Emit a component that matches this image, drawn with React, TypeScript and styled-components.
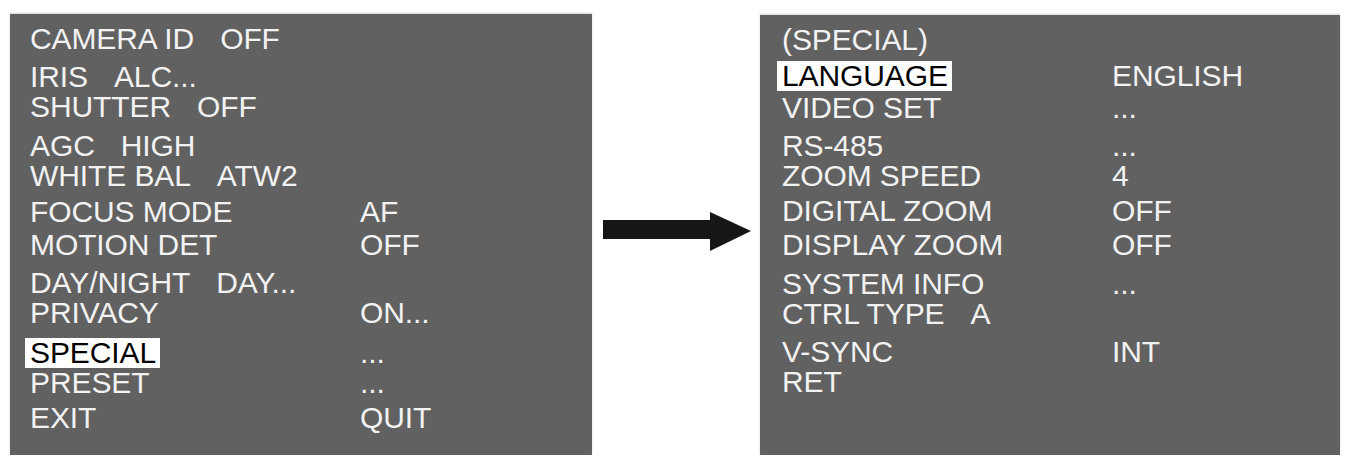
import { memo } from "react";
import styled, { createGlobalStyle } from "styled-components";

const COLOR_PAGE = "#ffffff";
const COLOR_PANEL = "#616161";
const COLOR_TEXT = "#f2f2f2";
const COLOR_ARROW = "#161616";

const GlobalStyle = createGlobalStyle`
  html, body {
    margin: 0;
    padding: 0;
    background: ${COLOR_PAGE};
  }
  body {
    font-family: "Liberation Sans", Arial, sans-serif;
  }
`;

const StyledPage = styled.div`
  display: flex;
  align-items: flex-start;
  padding: 14px 0 0 10px;
  width: 1348px;
  height: 457px;
  box-sizing: border-box;
`;

const StyledPanel = styled.div<{ $width: number; $height: number; $top?: number; $padLeft: number }>`
  flex: 0 0 auto;
  width: ${(p) => p.$width}px;
  height: ${(p) => p.$height}px;
  margin-top: ${(p) => p.$top ?? 0}px;
  padding: 10px 0 0 ${(p) => p.$padLeft}px;
  box-sizing: border-box;
  background-color: ${COLOR_PANEL};
  box-shadow: 0 -1px 2px rgba(0, 0, 0, 0.18);
  display: flex;
  flex-flow: column;
`;

const StyledRow = styled.div<{ $gap?: number }>`
  display: grid;
  grid-template-columns: 330px 1fr;
  margin-top: ${(p) => p.$gap ?? 0}px;
  height: 30px;
  line-height: 30px;
  font-size: 30px;
  letter-spacing: -0.1px;
  color: ${COLOR_TEXT};
  white-space: pre;
`;

const StyledLabel = styled.span<{ $active?: boolean }>`
  justify-self: start;
  ${(p) =>
    p.$active &&
    `
    background-color: #ffffff;
    color: #000000;
    margin-left: -5px;
    padding: 0 4px 0 5px;
  `}
`;

const StyledInline = styled.span`
  margin-left: 26px;
`;

const StyledValue = styled.span``;

const StyledArrowBox = styled.div`
  flex: 0 0 auto;
  width: 168px;
  height: 441px;
  display: flex;
  align-items: flex-start;
  padding: 198px 0 0 11px;
  box-sizing: border-box;
`;

type Item = {
  label: string;
  inline?: string;
  value?: string;
  gap?: number;
  active?: boolean;
};

const LEFT_ITEMS: Item[] = [
  { label: "CAMERA ID", inline: "OFF" },
  { label: "IRIS", inline: "ALC...", gap: 8 },
  { label: "SHUTTER", inline: "OFF" },
  { label: "AGC", inline: "HIGH", gap: 9 },
  { label: "WHITE BAL", inline: "ATW2" },
  { label: "FOCUS MODE", value: "AF", gap: 6 },
  { label: "MOTION DET", value: "OFF", gap: 3 },
  { label: "DAY/NIGHT", inline: "DAY...", gap: 8 },
  { label: "PRIVACY", value: "ON..." },
  { label: "SPECIAL", value: "...", gap: 10, active: true },
  { label: "PRESET", value: "..." },
  { label: "EXIT", value: "QUIT", gap: 5 },
];

const RIGHT_ITEMS: Item[] = [
  { label: "(SPECIAL)" },
  { label: "LANGUAGE", value: "ENGLISH", gap: 6, active: true },
  { label: "VIDEO SET", value: "...", gap: 2 },
  { label: "RS-485", value: "...", gap: 8 },
  { label: "ZOOM SPEED", value: "4" },
  { label: "DIGITAL ZOOM", value: "OFF", gap: 5 },
  { label: "DISPLAY ZOOM", value: "OFF", gap: 4 },
  { label: "SYSTEM INFO", value: "...", gap: 9 },
  { label: "CTRL TYPE", inline: "A" },
  { label: "V-SYNC", value: "INT", gap: 8 },
  { label: "RET" },
];

const MenuRows = memo(({ items }: { items: Item[] }) => (
  <>
    {items.map((item) => (
      <StyledRow key={item.label} $gap={item.gap}>
        <StyledLabel $active={item.active}>
          {item.label}
          {item.inline && <StyledInline>{item.inline}</StyledInline>}
        </StyledLabel>
        <StyledValue>{item.value ?? ""}</StyledValue>
      </StyledRow>
    ))}
  </>
));

const Arrow = () => (
  <svg width="150" height="42" viewBox="0 0 150 42">
    <path d="M0 8 H107 V0 L148 19 L107 39 V27 H0 Z" fill={COLOR_ARROW} />
  </svg>
);

const App = () => (
  <>
    <GlobalStyle />
    <StyledPage>
      <StyledPanel $width={582} $height={441} $padLeft={20}>
        <MenuRows items={LEFT_ITEMS} />
      </StyledPanel>
      <StyledArrowBox>
        <Arrow />
      </StyledArrowBox>
      <StyledPanel $width={580} $height={440} $top={1} $padLeft={22}>
        <MenuRows items={RIGHT_ITEMS} />
      </StyledPanel>
    </StyledPage>
  </>
);

export default App;
